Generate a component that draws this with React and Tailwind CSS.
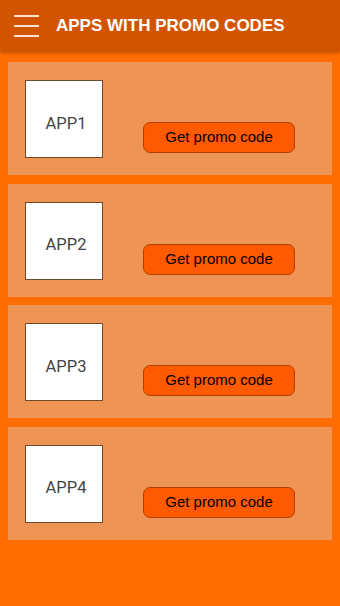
import React from "react";

const apps = ["APP1", "APP2", "APP3", "APP4"];

export default function App() {
  return (
    <div className="w-[340px] h-[606px] bg-[#ff6d00] flex flex-col" style={{ fontFamily: "Roboto, 'Liberation Sans', Arial, sans-serif" }}>
      <div className="h-[51px] bg-[#d35400] flex items-center shadow-[0_2px_3px_rgba(0,0,0,0.25)] shrink-0">
        <div className="ml-[14px] w-[25px] flex flex-col gap-[8px]">
          <div className="h-[2px] bg-[#f6e0d0]" />
          <div className="h-[2px] bg-[#f6e0d0]" />
          <div className="h-[2px] bg-[#f6e0d0]" />
        </div>
        <div className="ml-[17px] text-white font-bold text-[17px]" style={{ fontFamily: "'Liberation Sans', Arial, sans-serif" }}>
          APPS WITH PROMO CODES
        </div>
      </div>
      <div className="flex flex-col gap-[8.5px] px-[8px] pt-[11px]">
        {apps.map((a) => (
          <div key={a} className="h-[113px] bg-[#ee9556] flex items-start pl-[17px] pt-[18px]">
            <div className="w-[78px] h-[78px] bg-white border border-[#6b4a2a] flex items-center justify-center pt-[10px] pl-[4px] text-[16.5px] text-[#444]">
              {a}
            </div>
            <button className="ml-[40px] mt-[42px] w-[152px] h-[31px] rounded-[7px] bg-[#ff5a00] border border-[#b14000] text-[15px] text-black flex items-center justify-center" style={{ fontFamily: "'Liberation Sans', Arial, sans-serif" }}>
              Get promo code
            </button>
          </div>
        ))}
      </div>
    </div>
  );
}
